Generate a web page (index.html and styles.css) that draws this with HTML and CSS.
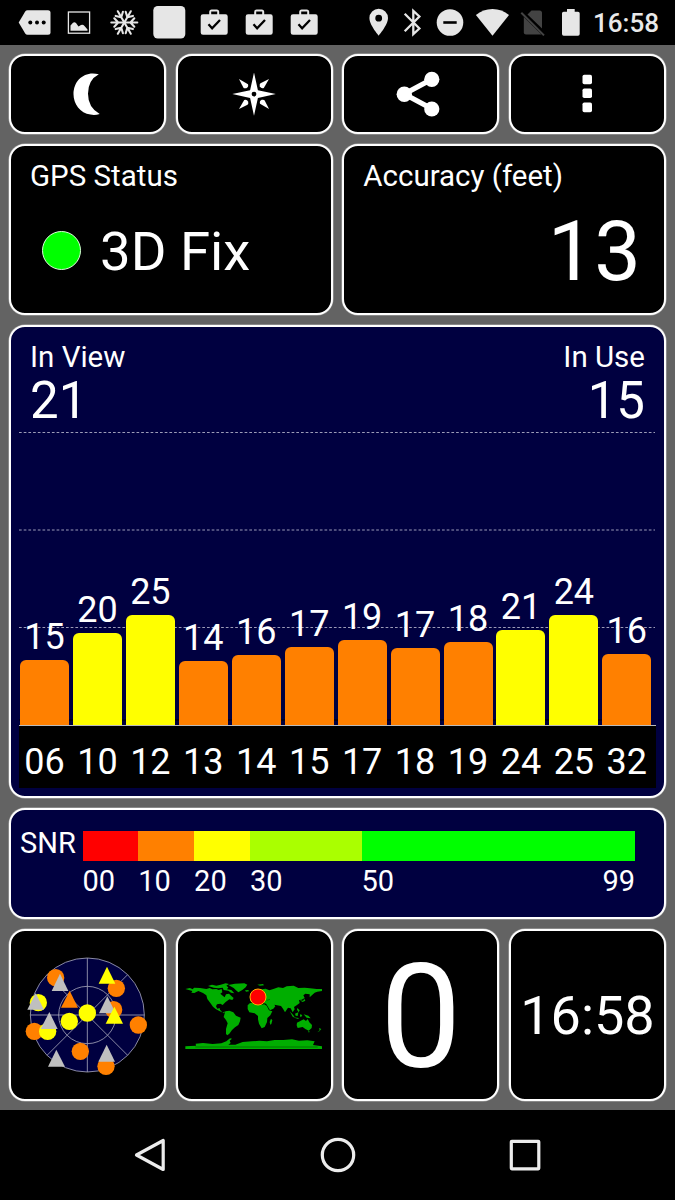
FILE: index.html
```html
<!DOCTYPE html>
<html lang="en">
<head>
<meta charset="utf-8">
<title>GPS Status</title>
<link rel="stylesheet" href="styles.css">
</head>
<body>
<header class="statusbar">
  <div class="notifications">
    <svg class="note" viewBox="11.5 0 45 45"><path d="M27 10.3H47.5Q50 10.3 50 12.8V32.2Q50 34.7 47.5 34.7H27Q25.600 34.7 24.700 33.400L18.200 22.500L24.700 11.600Q25.600 10.300 27 10.300Z"/><g fill="#000"><circle cx="29.800" cy="22.500" r="2"/><circle cx="36.500" cy="22.500" r="2"/><circle cx="43.200" cy="22.500" r="2"/></g></svg>
    <svg class="note" viewBox="56.500 0 45 45"><rect x="67.900" y="12" width="21.200" height="21.200" fill="none" stroke="#e6e6e6" stroke-width="1.300"/><path d="M70 30.800V25.500L72.500 22.700Q74 21.500 75.500 23L78 26.500L80.500 25Q82.500 24 84 26L87 29.500V30.800Z"/></svg>
    <svg class="note" viewBox="101.500 0 45 45"><g stroke="#e6e6e6" stroke-width="2.100" stroke-linecap="round" fill="none"><g id="arm"><path d="M123.800 22.500H110.800M113.800 18.300L117.700 22.500L113.800 26.700"/></g><use href="#arm" transform="rotate(60 123.800 22.500)"/><use href="#arm" transform="rotate(120 123.800 22.500)"/><use href="#arm" transform="rotate(180 123.800 22.500)"/><use href="#arm" transform="rotate(240 123.800 22.500)"/><use href="#arm" transform="rotate(300 123.800 22.500)"/></g></svg>
    <svg class="note" viewBox="146.500 0 45 45"><rect x="152.800" y="6" width="32" height="32.500" rx="4.500"/></svg>
    <svg class="note" viewBox="191.500 0 45 45"><g id="case"><path fill-rule="evenodd" d="M208.700 14.300V12Q208.700 9.500 211.200 9.500H216.200Q218.700 9.500 218.700 12V14.300H225Q227.200 14.300 227.200 16.500V32.500Q227.200 34.800 225 34.800H202.500Q200.200 34.800 200.200 32.500V16.500Q200.200 14.300 202.500 14.300ZM210.700 14.300H216.700V11.500H210.700Z"/><path d="M208 24.300L211.600 28.200L219.500 20" fill="none" stroke="#000" stroke-width="2.300"/></g></svg>
    <svg class="note" viewBox="236.500 0 45 45"><use href="#case" x="45"/></svg>
    <svg class="note" viewBox="281.500 0 45 45"><use href="#case" x="90"/></svg>
  </div>
  <div class="system">
    <svg width="34" height="45" viewBox="362 0 34 45"><path fill-rule="evenodd" d="M378.700 8.800A9.300 9.300 0 0 0 369.400 18.100C369.400 25 378.700 35.700 378.700 35.700S388 25 388 18.100A9.300 9.300 0 0 0 378.700 8.800ZM378.700 14.800A3.400 3.400 0 1 1 378.700 21.600A3.400 3.400 0 0 1 378.700 14.800Z"/></svg>
    <svg width="35" height="45" viewBox="396 0 35 45"><path d="M404.700 13.800L419.400 28.500L413.300 34.200V10.800L419.400 16.500L404.700 31.200" fill="none" stroke="#e6e6e6" stroke-width="2.300"/></svg>
    <svg width="39" height="45" viewBox="431 0 39 45"><circle cx="450" cy="22.500" r="13.300"/><path d="M443.300 22.500H456.700" stroke="#000" stroke-width="2.600"/></svg>
    <svg width="44" height="45" viewBox="470 0 44 45"><path d="M492.500 35.700L475.900 15Q483 9 492.500 9T509 15Z"/></svg>
    <svg width="39" height="45" viewBox="514 0 39 45"><g fill="#434343"><path d="M531.500 10.500H539.500Q542 10.500 542 13V28.500L527.500 14.500Z"/><path d="M523.800 17L541.500 34.600H526Q523.800 34.600 523.800 32.500Z"/></g><path d="M521.300 12.700L544 35.400" stroke="#434343" stroke-width="2"/></svg>
    <svg width="35" height="45" viewBox="553 0 35 45"><path d="M567 9H574.700V11.700H578Q579.700 11.700 579.700 13.300V34Q579.700 35.700 578 35.700H563.700Q562 35.700 562 34V13.300Q562 11.700 563.700 11.700H567Z"/></svg>
    <span class="clock">16:58</span>
  </div>
</header>

<main class="board">
  <button class="card tool"><svg viewBox="68 72 40 44"><path d="M98.800 74.300Q88 80 88 93.800T99.700 114Q95 115.500 90.500 114.600C80 113 73.500 104 73.500 94.200C73.500 80 85 70.500 98.800 74.300Z"/></svg></button>
  <button class="card tool"><svg class="large" viewBox="232 70 44 48"><path fill-rule="evenodd" d="M254 72.500L257.900 90.200L275.800 94L257.900 98L254 115.800L250.100 98L232.300 94L250.100 90.200ZM254 91.700A2.400 2.400 0 1 0 254 96.500A2.400 2.400 0 0 0 254 91.700Z"/><g id="ray"><path d="M239 79L248 84.200Q248.800 87 246.300 88.200Q244 88.700 243.300 87.500Z"/></g><use href="#ray" transform="rotate(90 254 94)"/><use href="#ray" transform="rotate(180 254 94)"/><use href="#ray" transform="rotate(270 254 94)"/></svg></button>
  <button class="card tool"><svg class="large" viewBox="394.700 70 52 48"><path d="M431.500 79.300L404 94L431.500 108.800" fill="none" stroke="#fff" stroke-width="5.200"/><circle cx="431.500" cy="79.300" r="7.600"/><circle cx="404" cy="94.200" r="7.700"/><circle cx="431.500" cy="109" r="7.600"/></svg></button>
  <button class="card tool"><svg class="small" viewBox="577 74 20 42"><rect x="582.500" y="75.700" width="9.500" height="9.500" rx="1.800"/><rect x="582.500" y="89.500" width="9.500" height="9.500" rx="1.800"/><rect x="582.500" y="103.500" width="9.500" height="9.800" rx="1.800"/></svg></button>

  <section class="card half">
    <div class="title">GPS Status</div>
    <div class="fix"><span class="dot"></span><span class="fix-text">3D Fix</span></div>
  </section>
  <section class="card half">
    <div class="title">Accuracy (feet)</div>
    <div class="accuracy">13</div>
  </section>

  <section class="card full signals">
    <div class="counts">
      <div><div class="count-label">In View</div><div class="count">21</div></div>
      <div class="right"><div class="count-label">In Use</div><div class="count">15</div></div>
    </div>
    <div class="chart">
      <svg class="grid" viewBox="0 0 637 293"><path d="M0 .5H636M0 98H636M0 195.500H636" stroke="#9c9cb8" stroke-width="1" stroke-dasharray="2.700 2"/><path d="M0 288H632" stroke="#000"/></svg>
      <div class="bars">
        <div class="col"><span>15</span><i class="bar orange" style="height:65px"></i></div>
        <div class="col"><span>20</span><i class="bar yellow" style="height:92px"></i></div>
        <div class="col"><span>25</span><i class="bar yellow" style="height:110px"></i></div>
        <div class="col"><span>14</span><i class="bar orange" style="height:64px"></i></div>
        <div class="col"><span>16</span><i class="bar orange" style="height:70px"></i></div>
        <div class="col"><span>17</span><i class="bar orange" style="height:77.700px"></i></div>
        <div class="col"><span>19</span><i class="bar orange" style="height:85px"></i></div>
        <div class="col"><span>17</span><i class="bar orange" style="height:76.700px"></i></div>
        <div class="col"><span>18</span><i class="bar orange" style="height:83px"></i></div>
        <div class="col"><span>21</span><i class="bar yellow" style="height:95px"></i></div>
        <div class="col"><span>24</span><i class="bar yellow" style="height:109.700px"></i></div>
        <div class="col"><span>16</span><i class="bar orange" style="height:71px"></i></div>
      </div>
    </div>
    <div class="ids"><span>06</span><span>10</span><span>12</span><span>13</span><span>14</span><span>15</span><span>17</span><span>18</span><span>19</span><span>24</span><span>25</span><span>32</span></div>
  </section>

  <section class="card full snr">
    <div class="snr-label">SNR</div>
    <div class="scale">
      <div class="seg red"></div><div class="seg orange"></div><div class="seg yellow"></div><div class="seg lime"></div><div class="seg green"></div>
      <span>00</span><span>10</span><span>20</span><span>30</span><span class="ends"><b>50</b><b>99</b></span>
    </div>
  </section>

  <section class="card tile">
    <svg width="145" height="150" viewBox="0 0 435 450">
      <circle cx="217" cy="225" r="171" fill="#000040"/>
      <g fill="none" stroke="#a4a4b8" stroke-width="2.500"><circle cx="217" cy="225" r="171"/><circle cx="217" cy="225" r="86"/><path d="M217 54V396M46 225H388M96 104L338 346M96 346L338 104"/></g>
      <g fill="#ff8000"><circle cx="122" cy="113" r="26"/><circle cx="304" cy="145" r="26"/><circle cx="296" cy="209" r="26"/><circle cx="370" cy="255" r="26"/><circle cx="58" cy="274" r="26"/><circle cx="196" cy="334" r="26"/><circle cx="273" cy="379" r="26"/><path d="M164 152L189 203H138Z"/></g>
      <g fill="#ff0"><circle cx="70" cy="188" r="26"/><circle cx="98" cy="274" r="26"/><circle cx="163" cy="244" r="26"/><circle cx="217" cy="219" r="26"/></g>
      <g fill="#bfbfbf"><path d="M135 101L160 153H110Z"/><path d="M62 159L87 209H37Z"/><path d="M103 216L128 267H77Z"/><path d="M277 169L302 220H252Z"/><path d="M124 329L150 380H99Z"/><path d="M275 314L300 365H250Z"/></g>
      <g fill="#ff0"><path d="M276 80L301 131H251Z"/><path d="M298 200L324 251H272Z"/></g>
    </svg>
  </section>
  <section class="card tile">
    <svg width="160" height="90" viewBox="-3 0 480 270">
      <g fill="#00ae00">
        <path d="M31 57L45 54L53 58L57 53L75 54L94 57L104 54L112 58L124 57L131 60L140 57L142 67L136 71L144 78L149 82L153 73L162 71L169 78L176 84L172 90L163 88L157 92L151 97L143 105L136 101L126 103L123 109L127 116L134 114L135 119L143 128L151 124L147 130L133 123L122 117L114 110L106 99L97 87L94 76L84 69L70 63L58 69L49 68L52 63Z"/>
        <path d="M99 48L111 44L124 47L137 44L152 40L162 42L154 47L160 52L156 58L169 60L178 70L168 68L160 62L146 60L143 53L130 55L116 53Z"/>
        <path d="M160 45L180 41L208 40L217 44L212 52L202 60L190 67L183 61L176 54Z"/>
        <path d="M151 124L163 122L175 127L183 137L197 143L195 154L190 165L180 172L171 180L163 191L157 196L153 192L153 177L158 160L153 150L146 141Z"/>
        <path d="M210 61L220 60L222 64L213 65ZM225 69L232 73L229 78L225 76ZM247 44L264 42L267 46L255 47Z"/>
        <path d="M218 106L225 99L239 98L254 104L268 103L275 107L282 121L292 124L286 136L277 144L276 156L269 171L260 175L252 161L249 148L249 138L239 130L223 127L218 117Z"/>
        <path d="M225 94L225 85L234 75L249 65L260 58L272 56L283 61L295 57L310 52L324 54L335 49L356 47L370 54L389 53L405 55L425 57L441 57V63L427 65L419 68L409 77L404 82L404 73L391 71L385 76L389 84L380 89L372 90L374 99L365 106L357 111L359 118L353 127L347 115L339 113L330 127L324 116L318 108L306 106L298 104L301 109L295 116L285 121L277 107L273 101L263 99L259 93L249 93L241 88L233 96Z"/>
        <path d="M288 146L292 151L289 162L286 164L284 156ZM344 124L354 134L359 142L353 140ZM360 131L370 127L368 138L362 137ZM375 133L382 135L378 142L375 139ZM386 133L400 137L407 145L395 143ZM374 91L384 92L388 86L386 82L391 92L383 96ZM367 114L374 121L371 127L366 119ZM353 142L371 144L370 147Z"/>
        <path d="M366 158L376 153L386 148L393 153L398 147L403 157L411 165L410 174L401 182L391 177L383 171L368 174L365 166ZM399 184L404 184L402 188ZM432 174L439 177L433 184L427 187L434 181Z"/>
        <path d="M31 229L63 227L62 221L84 219L113 222L139 220L154 214L165 205L171 206L164 212L167 219L160 224L181 224L203 216L230 214L253 212L276 214L299 210L325 210L351 208L372 212L397 211L419 214L414 225L441 229V237H31Z"/>
      </g>
      <path d="M275 91L285 88M61 231H428" stroke="#000" stroke-width="1" fill="none"/>
      <circle cx="249" cy="81" r="24" fill="#f00" stroke="#ffb000" stroke-width="3"/>
    </svg>
  </section>
  <section class="card tile"><span class="speed">0</span></section>
  <section class="card tile"><span class="time">16:58</span></section>
</main>

<nav class="navbar">
  <svg width="40" height="40" viewBox="0 0 40 40"><path d="M33.200 5.500V34.500L6.500 20Z"/></svg>
  <svg width="40" height="40" viewBox="0 0 40 40"><circle cx="20" cy="20" r="15.700"/></svg>
  <svg width="40" height="40" viewBox="0 0 40 40"><rect x="6.300" y="6.300" width="27.500" height="27.500" rx=".5"/></svg>
</nav>
</body>
</html>
```

FILE: styles.css
```css
* { box-sizing: border-box; }
body { margin: 0; width: 675px; height: 1200px; overflow: hidden; background: #636363; color: #fff; font-family: Roboto, "Liberation Sans", sans-serif; }
svg { display: block; flex: none; }

.statusbar { height: 45px; background: #000; display: flex; justify-content: space-between; padding-left: 11.5px; fill: #e6e6e6; }
.notifications, .system { display: flex; }
.note { width: 45px; height: 45px; }
.system { width: 313px; color: #e9e9e9; }
.clock { margin-left: 5px; font-size: 26px; line-height: 47px; font-weight: 500; }

.board { display: grid; grid-template-columns: repeat(4, 1fr); grid-template-rows: 80px 171px 473px 111px 172px; gap: 10px 9.5px; padding: 9px; }
.card { background: #000; border: 2px solid #fff; border-radius: 16px; min-width: 0; box-shadow: 0 0 0 .5px #b0b0b0; }
.half { grid-column: span 2; padding: 12px 18px 0 19px; }
.full { grid-column: span 4; background: #000040; }
.tool { display: flex; align-items: center; justify-content: center; padding: 0; fill: #fff; }
.tool svg { height: 44px; }
.tool .large { height: 48px; }
.tool .small { height: 42px; }

.title { font-size: 29.5px; line-height: 36px; }
.fix { display: flex; align-items: center; height: 60px; margin: 26px 0 0 12px; }
.dot { width: 39px; height: 39px; border-radius: 50%; background: #0f0; border: 1px solid #d8ffd8; }
.fix-text { font-size: 54.5px; line-height: 60px; margin-left: 19px; padding-top: 2px; }
.accuracy { font-size: 83px; line-height: 84px; margin-top: 16px; padding-right: 5px; text-align: right; }

.signals { padding: 12px 8px 0; }
.counts { display: flex; justify-content: space-between; padding: 0 11px; height: 93px; }
.right { text-align: right; }
.count-label { font-size: 29.5px; line-height: 36px; }
.count { font-size: 51px; line-height: 52px; }
.chart { display: grid; height: 293px; }
.grid { grid-area: 1 / 1; width: 637px; height: 293px; fill: none; }
.bars { grid-area: 1 / 1; display: flex; gap: 3.950px; padding-left: 1px; align-items: flex-end; z-index: 1; }
.col { width: 49px; text-align: center; font-size: 36px; line-height: 36px; }
.col span { display: block; margin-bottom: 5px; }
.bar { display: block; border-radius: 6px 6px 0 0; }
.orange { background: #ff8000; }
.yellow { background: #ff0; }
.red { background: #f00; }
.lime { background: #af0; }
.green { background: #0f0; }
.ids { height: 63px; background: #000; border-top: 1px solid #bbb; display: flex; gap: 3.950px; padding-left: 1px; font-size: 36px; line-height: 72px; }
.ids span { width: 49px; text-align: center; flex: none; }

.snr { display: flex; padding: 21px 29px 0 9px; }
.snr-label { width: 62.500px; font-size: 29px; line-height: 24px; }
.scale { flex: 1; display: grid; grid-template-columns: 10fr 10fr 10fr 20fr 49fr; grid-template-rows: 30px 40px; font-size: 29px; line-height: 41px; }
.ends { display: flex; justify-content: space-between; }
.ends b { font-weight: 400; }

.tile { display: flex; align-items: center; justify-content: center; overflow: hidden; }
.speed { font-size: 145px; line-height: 172px; padding-top: 3px; }
.time { font-size: 54px; line-height: 60px; padding-top: 1px; }

.navbar { height: 90px; background: #000; display: flex; justify-content: space-between; align-items: center; padding: 0 130px; fill: none; stroke: #ececec; stroke-width: 3.200; stroke-linejoin: round; }
```
